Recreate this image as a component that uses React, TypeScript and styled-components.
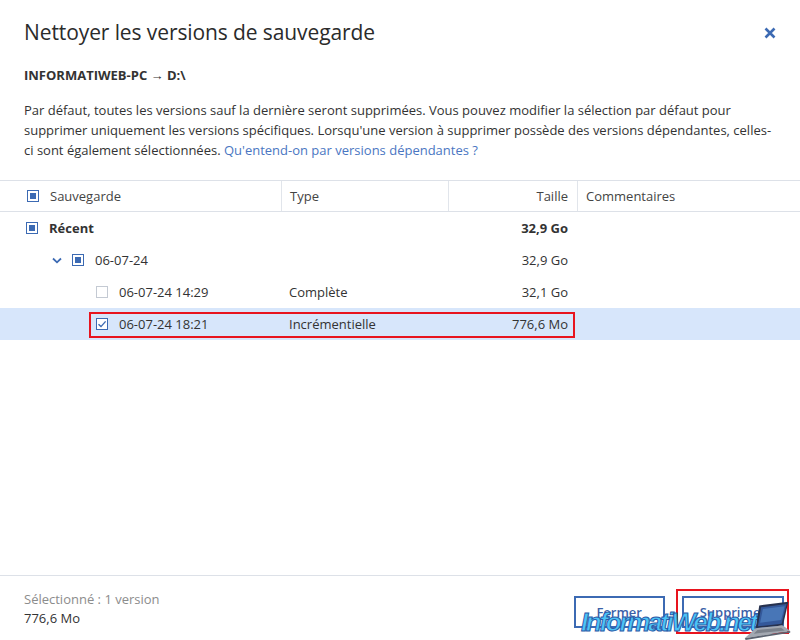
import React from "react";
import styled, { createGlobalStyle } from "styled-components";

const GlobalStyle = createGlobalStyle`
  html, body {
    margin: 0;
    padding: 0;
    background: #ffffff;
  }
  body {
    font-family: "Segoe UI", "Open Sans", "Noto Sans", sans-serif;
    color: #333333;
  }
`;

const BLUE = "#3c6ab3";

const Dialog = styled.div`
  position: relative;
  width: 800px;
  height: 640px;
  display: flex;
  flex-direction: column;
  background: #ffffff;
  overflow: hidden;
`;

const Top = styled.div`
  padding: 18px 24px 0 24px;
`;

const TitleRow = styled.div`
  display: flex;
  align-items: center;
  justify-content: space-between;
`;

const Title = styled.h1`
  margin: 0;
  font-size: 21px;
  font-weight: 400;
  color: #2b2b2b;
  letter-spacing: -0.1px;
`;

const CloseButton = styled.button`
  border: none;
  background: none;
  padding: 0;
  margin: 1px -2px 0 0;
  width: 16px;
  height: 16px;
  display: flex;
  align-items: center;
  justify-content: center;
  cursor: pointer;
`;

const Source = styled.div`
  margin-top: 20px;
  font-size: 13px;
  font-weight: 700;
  color: #333333;
`;

const Description = styled.p`
  margin: 16px 0 0 0;
  font-size: 13px;
  line-height: 20px;
  color: #333333;
  white-space: nowrap;
`;

const Link = styled.a`
  color: #4a76c2;
  text-decoration: none;
`;

const Table = styled.div`
  margin-top: 20px;
  display: flex;
  flex-direction: column;
`;

const Row = styled.div<{ $header?: boolean; $selected?: boolean }>`
  position: relative;
  display: grid;
  grid-template-columns: 281px 167px 129px 1fr;
  height: 32px;
  font-size: 13px;
  background: ${({ $selected }) => ($selected ? "#d7e6fb" : "transparent")};
  border-top: ${({ $header }) => ($header ? "1px solid #dde1e8" : "none")};
  border-bottom: ${({ $header }) => ($header ? "1px solid #dde1e8" : "none")};
  box-sizing: border-box;
`;

const Cell = styled.div<{ $right?: boolean; $sep?: boolean; $bold?: boolean; $indent?: number }>`
  display: flex;
  align-items: center;
  justify-content: ${({ $right }) => ($right ? "flex-end" : "flex-start")};
  padding: ${({ $right, $indent }) =>
    $right ? "0 9px 0 8px" : `0 8px 0 ${$indent ?? 8}px`};
  border-left: ${({ $sep }) => ($sep ? "1px solid #e1e5eb" : "none")};
  font-weight: ${({ $bold }) => ($bold ? 700 : 400)};
  color: #333333;
  gap: 11px;
  white-space: nowrap;
`;

const HeaderCell = styled(Cell)`
  color: #444444;
`;

const Box = styled.span<{ $state: "partial" | "checked" | "empty" }>`
  width: 12px;
  height: 12px;
  box-sizing: border-box;
  flex-shrink: 0;
  border: 1px solid ${({ $state }) => ($state === "empty" ? "#c4cad3" : BLUE)};
  background: #ffffff;
  display: flex;
  align-items: center;
  justify-content: center;
`;

const Dot = styled.span`
  width: 6px;
  height: 6px;
  background: ${BLUE};
`;

const Chevron = styled.span`
  width: 10px;
  display: flex;
  align-items: center;
  justify-content: center;
  margin-right: -1px;
`;

const Highlight = styled.div`
  position: absolute;
  left: 89px;
  top: 4px;
  width: 486px;
  height: 26px;
  border: 2px solid #e8141e;
  box-sizing: border-box;
  pointer-events: none;
`;

const Spacer = styled.div`
  flex: 1;
`;

const Footer = styled.div`
  height: 65px;
  border-top: 1px solid #dde1e8;
  display: flex;
  align-items: center;
  justify-content: space-between;
  padding: 0 16px 0 24px;
  box-sizing: border-box;
`;

const Summary = styled.div`
  display: flex;
  flex-direction: column;
  font-size: 13px;
  line-height: 19px;
  margin-top: 2px;
`;

const Muted = styled.span`
  color: #8c8c8c;
`;

const Buttons = styled.div`
  display: flex;
  gap: 17px;
  margin-top: 7px;
`;

const Button = styled.button<{ $marked?: boolean }>`
  position: relative;
  height: 32px;
  padding: 0 16px;
  min-width: 91px;
  border: 2px solid ${BLUE};
  background: #ffffff;
  color: #3b5fa8;
  font-family: inherit;
  font-size: 13px;
  font-weight: 600;
  cursor: pointer;

  &::after {
    content: "";
    display: ${({ $marked }) => ($marked ? "block" : "none")};
    position: absolute;
    left: -8px;
    right: -7px;
    top: -9px;
    bottom: -8px;
    border: 2px solid #e8141e;
  }
`;

const Watermark = styled.div`
  position: absolute;
  right: 8px;
  bottom: 0;
  display: flex;
  align-items: flex-end;
  pointer-events: none;
`;

const WatermarkText = styled.span`
  font-family: "Liberation Sans", Arial, sans-serif;
  font-style: italic;
  font-weight: 700;
  font-size: 26px;
  line-height: 26px;
  color: #4cc4f6;
  -webkit-text-stroke: 1px #2a5aa8;
  letter-spacing: -2.3px;
  margin-right: -24px;
  margin-bottom: 5px;
`;

function Check({ state }: { state: "partial" | "checked" | "empty" }) {
  return (
    <Box $state={state}>
      {state === "partial" && <Dot />}
      {state === "checked" && (
        <svg width="10" height="10" viewBox="0 0 10 10">
          <path d="M1.5 5.2 L4 7.6 L8.6 2.4" fill="none" stroke={BLUE} strokeWidth="1.4" />
        </svg>
      )}
    </Box>
  );
}

function Laptop() {
  return (
    <svg width="60" height="40" viewBox="0 0 66 44">
      <polygon points="30,6 62,2 56,28 26,31" fill="#27324f" />
      <polygon points="32,8 60,4.5 54.5,26 28.5,29" fill="#34589a" />
      <polygon points="34,10 58,7 54,22 31,25" fill="#5a8fd0" opacity="0.55" />
      <polygon points="26,31 56,28 64,34 14,42" fill="#a3a8b1" />
      <polygon points="14,42 64,34 64,36 15,44" fill="#5c6370" />
      <polygon points="28,33 54,30.5 58,33.5 24,37" fill="#7b818b" />
    </svg>
  );
}

export default function App() {
  return (
    <>
      <GlobalStyle />
      <Dialog>
        <Top>
          <TitleRow>
            <Title>Nettoyer les versions de sauvegarde</Title>
            <CloseButton aria-label="Fermer">
              <svg width="12" height="12" viewBox="0 0 12 12">
                <path d="M1.5 1.5 L10.5 10.5 M10.5 1.5 L1.5 10.5" stroke={BLUE} strokeWidth="2.6" />
              </svg>
            </CloseButton>
          </TitleRow>
          <Source>INFORMATIWEB-PC → D:\</Source>
          <Description>
            Par défaut, toutes les versions sauf la dernière seront supprimées. Vous pouvez modifier la
            sélection par défaut pour
            <br />
            supprimer uniquement les versions spécifiques. Lorsqu'une version à supprimer possède des
            versions dépendantes, celles-
            <br />
            ci sont également sélectionnées. <Link href="#">Qu'entend-on par versions dépendantes ?</Link>
          </Description>
        </Top>

        <Table>
          <Row $header>
            <HeaderCell $indent={27}>
              <Check state="partial" />
              Sauvegarde
            </HeaderCell>
            <HeaderCell $sep>Type</HeaderCell>
            <HeaderCell $sep $right>
              Taille
            </HeaderCell>
            <HeaderCell $sep>Commentaires</HeaderCell>
          </Row>
          <Row>
            <Cell $indent={26} $bold>
              <Check state="partial" />
              Récent
            </Cell>
            <Cell />
            <Cell $right $bold>
              32,9 Go
            </Cell>
            <Cell />
          </Row>
          <Row>
            <Cell $indent={52}>
              <Chevron>
                <svg width="10" height="7" viewBox="0 0 10 7">
                  <path d="M1 1.5 L5 5.3 L9 1.5" fill="none" stroke={BLUE} strokeWidth="1.8" />
                </svg>
              </Chevron>
              <Check state="partial" />
              06-07-24
            </Cell>
            <Cell />
            <Cell $right>32,9 Go</Cell>
            <Cell />
          </Row>
          <Row>
            <Cell $indent={96}>
              <Check state="empty" />
              06-07-24 14:29
            </Cell>
            <Cell>Complète</Cell>
            <Cell $right>32,1 Go</Cell>
            <Cell />
          </Row>
          <Row $selected>
            <Cell $indent={96}>
              <Check state="checked" />
              06-07-24 18:21
            </Cell>
            <Cell>Incrémentielle</Cell>
            <Cell $right>776,6 Mo</Cell>
            <Cell />
            <Highlight />
          </Row>
        </Table>

        <Spacer />

        <Footer>
          <Summary>
            <Muted>Sélectionné : 1 version</Muted>
            <span>776,6 Mo</span>
          </Summary>
          <Buttons>
            <Button>Fermer</Button>
            <Button $marked>Supprimer</Button>
          </Buttons>
        </Footer>

        <Watermark>
          <WatermarkText>InformatiWeb.net</WatermarkText>
          <Laptop />
        </Watermark>
      </Dialog>
    </>
  );
}
